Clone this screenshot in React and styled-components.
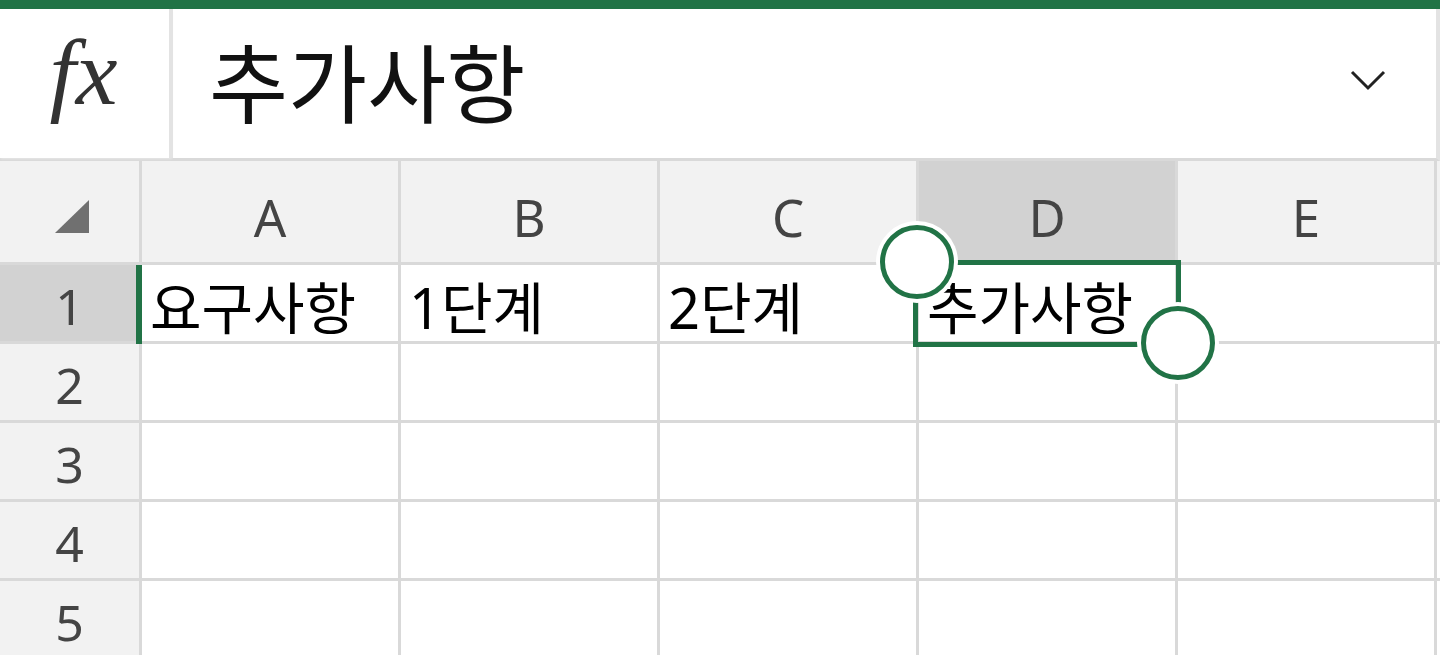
import React from 'react';
import styled, {createGlobalStyle} from 'styled-components';

const GlobalStyle = createGlobalStyle`
    html, body {
        margin: 0;
        padding: 0;
        background: #ffffff;
        overflow: hidden;
    }
`;

const GRID = '#d9d9d9';
const GREEN = '#217346';
const FONT = `"Noto Sans", "Noto Sans CJK KR", sans-serif`;

const Screen = styled.div`
    width: 1440px;
    height: 655px;
    display: flex;
    flex-direction: column;
    overflow: hidden;
    font-family: ${FONT};
`;

const Stripe = styled.div`
    height: 9px;
    background: ${GREEN};
    flex-shrink: 0;
`;

// formula bar
const FormulaBar = styled.div`
    height: 149px;
    display: flex;
    flex-shrink: 0;
    border-bottom: 3px solid ${GRID};
    border-right: 4px solid #e3e3e3;
`;

const FxBox = styled.div`
    width: 169px;
    height: 140px;
    display: flex;
    align-items: center;
    justify-content: center;
    border-right: 4px solid #e3e3e3;
    box-shadow: 0 2px 2px -1px #e6e6e6;
    font-family: "Liberation Serif", serif;
    font-style: italic;
    font-size: 94px;
    color: #333333;
    padding-bottom: 9px;
    box-sizing: content-box;
`;

const Fx = styled.span`
    transform: translate(-1px, -7px);
`;

const FormulaText = styled.div`
    flex: 1;
    display: flex;
    align-items: center;
    padding-left: 36px;
    padding-bottom: 8px;
    font-size: 86px;
    color: #111111;
`;

const Chevron = styled.div`
    width: 136px;
    display: flex;
    align-items: center;
    justify-content: center;
    padding-bottom: 8px;
`;

// sheet grid
const Sheet = styled.div`
    flex: 1;
    display: grid;
    grid-template-columns: 139px repeat(5, 256px) 1fr;
    grid-template-rows: 101px repeat(5, 76px);
    gap: 3px;
    background: ${GRID};
`;

const Corner = styled.div`
    background: #f2f2f2;
`;

const ColHead = styled.div`
    background: ${p => (p.$active ? '#d2d2d2' : '#f2f2f2')};
    display: flex;
    align-items: center;
    justify-content: center;
    font-size: 51px;
    color: #444444;
    padding-top: 10px;
`;

const RowHead = styled.div`
    background: ${p => (p.$active ? '#d2d2d2' : '#f2f2f2')};
    display: flex;
    align-items: center;
    justify-content: center;
    font-size: 50px;
    color: #444444;
    padding-top: 6px;
    position: relative;
`;

const RowMark = styled.span`
    position: absolute;
    right: -3px;
    top: 0;
    bottom: -3px;
    width: 6px;
    background: ${GREEN};
`;

const Cell = styled.div`
    background: #ffffff;
    display: flex;
    align-items: center;
    padding-left: 8px;
    padding-top: 2px;
    font-size: 56px;
    color: #000000;
    white-space: nowrap;
    position: relative;
`;

const Filler = styled.div`
    background: ${p => (p.$head ? '#f2f2f2' : '#ffffff')};
`;

const Selection = styled.div`
    position: absolute;
    top: -5px;
    left: -6px;
    right: -6px;
    bottom: -6px;
    border: 5px solid ${GREEN};
    pointer-events: none;
    z-index: 1;
`;

const Handle = styled.div`
    position: absolute;
    width: 64px;
    height: 64px;
    border-radius: 50%;
    border: 5px solid ${GREEN};
    background: #ffffff;
    box-shadow: 0 0 0 4px #ffffff;
    z-index: 2;
    ${p => (p.$end
        ? 'right: -40px; bottom: -39px;'
        : 'left: -39px; top: -40px;')}
`;

const columns = ['A', 'B', 'C', 'D', 'E'];
const rows = [
    ['요구사항', '1단계', '2단계', '추가사항', ''],
    ['', '', '', '', ''],
    ['', '', '', '', ''],
    ['', '', '', '', ''],
    ['', '', '', '', ''],
];

const App = () => (
    <>
        <GlobalStyle />
        <Screen>
            <Stripe />
            <FormulaBar>
                <FxBox><Fx>fx</Fx></FxBox>
                <FormulaText>추가사항</FormulaText>
                <Chevron>
                    <svg width="36" height="22" viewBox="0 0 36 22">
                        <path d="M2 3 L18 19 L34 3" fill="none" stroke="#222" strokeWidth="3" />
                    </svg>
                </Chevron>
            </FormulaBar>
            <Sheet>
                <Corner>
                    <svg width="139" height="101" viewBox="0 0 139 101">
                        <polygon points="55,72 89,39 89,72" fill="#707070" />
                    </svg>
                </Corner>
                {columns.map(c => (
                    <ColHead key={c} $active={c === 'D'}>{c}</ColHead>
                ))}
                <Filler $head />
                {rows.map((r, i) => (
                    <React.Fragment key={i}>
                        <RowHead $active={i === 0}>
                            {i + 1}
                            {i === 0 && <RowMark />}
                        </RowHead>
                        {r.map((val, j) => (
                            <Cell key={j}>
                                {val}
                                {i === 0 && j === 3 && (
                                    <>
                                        <Selection />
                                        <Handle />
                                        <Handle $end />
                                    </>
                                )}
                            </Cell>
                        ))}
                        <Filler />
                    </React.Fragment>
                ))}
            </Sheet>
        </Screen>
    </>
);

export default App;
